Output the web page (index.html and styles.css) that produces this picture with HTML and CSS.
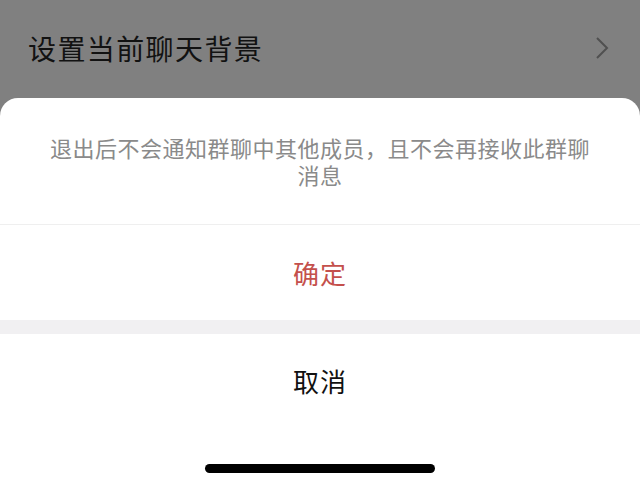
FILE: index.html
```html
<!DOCTYPE html>
<html>
<head>
<meta charset="utf-8">
<title>退出群聊</title>
<link rel="stylesheet" href="styles.css">
</head>
<body>
<div class="row">
	<span class="row-title">设置当前聊天背景</span>
	<svg class="chevron" width="14" height="24" viewBox="0 0 14 24"><path d="M2 2 L12 12 L2 22" fill="none" stroke="#505050" stroke-width="2"/></svg>
</div>

<div class="sheet">
	<div class="sheet-msg">退出后不会通知群聊中其他成员，且不会再接收此群聊
消息</div>
	<div class="sheet-btn confirm">确定</div>
	<div class="sheet-gap"></div>
	<div class="sheet-btn cancel">取消</div>
	<div class="home-area"><div class="home-bar"></div></div>
</div>
</body>
</html>
```

FILE: styles.css
```css
html, body {margin: 0; height: 100%;}
body {background: #808080; font-family: "Noto Sans CJK SC", "Noto Sans", sans-serif; display: flex; flex-direction: column; overflow: hidden;}
.row {height: 98px; display: flex; align-items: center; justify-content: space-between; padding: 0 31px 0 28px; box-sizing: border-box;}
.row-title {font-size: 28px; color: #121212; letter-spacing: 1.4px; margin-top: -2px;}
.chevron {margin-top: -2px;}
.sheet {flex: 1; background: #fff; border-radius: 18px 18px 0 0; display: flex; flex-direction: column;}
.sheet-msg {padding: 36px 40px 36px; font-size: 22px; line-height: 27px; color: #8a8a8a; text-align: center; letter-spacing: 0.5px; white-space: pre-line; border-bottom: 1px solid #efefef;}
.sheet-btn {display: flex; align-items: center; justify-content: center; font-size: 26px; letter-spacing: 1px;}
.confirm {height: 95px; color: #c4504c;}
.sheet-gap {height: 14px; background: #f1f0f2;}
.cancel {height: 92px; color: #111;}
.home-area {flex: 1; display: flex; justify-content: center;}
.home-bar {width: 230px; height: 9px; border-radius: 5px; background: #000; margin-top: 38px;}
```
